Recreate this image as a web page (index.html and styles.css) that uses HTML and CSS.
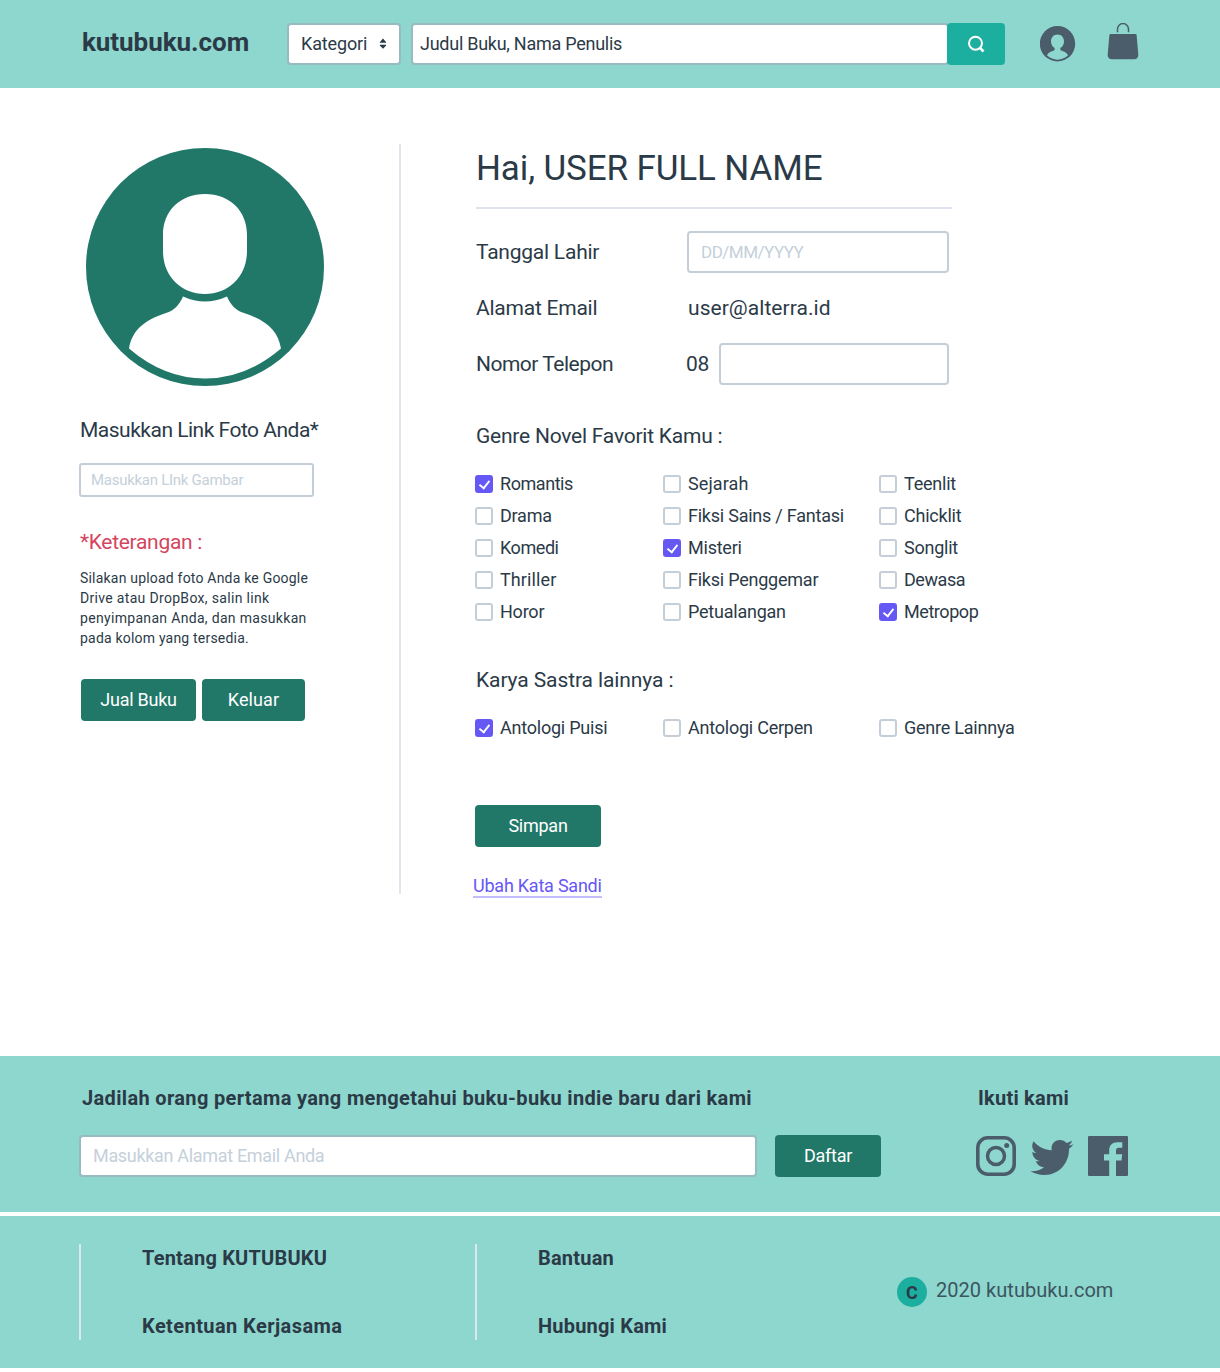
FILE: index.html
```html
<!DOCTYPE html>
<html lang="id">
<head>
<meta charset="utf-8">
<title>kutubuku.com</title>
<link rel="stylesheet" href="styles.css">
</head>
<body>
<header class="topbar">
  <a class="logo"><span>kutubuku.com</span></a>
  <div class="category"><span>Kategori</span>
    <svg width="8" height="12" viewBox="0 0 8 12"><path d="M4 .4 7.200 4.200Q7.200 4.800 6.800 4.800H1.200Q.8 4.800.8 4.200zM4 10.800 7.200 7.400Q7.200 6.800 6.800 6.800H1.200Q.8 6.800.8 7.400z" fill="#2b3a47"/></svg>
  </div>
  <div class="search"><span>Judul Buku, Nama Penulis</span></div>
  <button class="search-btn" aria-label="Cari">
    <svg width="18" height="18" viewBox="0 0 18 18" fill="none" stroke="#fff" stroke-width="2"><circle cx="8.500" cy="8.200" r="6.500"/><path d="M13 12.800 16.500 16.500" stroke-width="2.600"/></svg>
  </button>
  <svg class="user-icon" width="36" height="36" viewBox="0 0 36 36"><circle cx="17.500" cy="17.700" r="17.700" fill="#4b5c6b"/><path d="M17.500 8.400c4 0 6.500 2.800 6.500 7 0 3-1.500 5.300-3.700 6.500v1.200c0 1 .8 1.600 2 2 3 1 5 2.200 5.700 4.500C24.800 32.400 21.300 33.700 17.500 33.700s-7.300-1.300-10.500-4.100c.7-2.300 2.700-3.500 5.700-4.500 1.200-.4 2-1 2-2v-1.200c-2.200-1.200-3.700-3.500-3.700-6.500 0-4.200 2.500-7 6.500-7z" fill="#8ed7ce"/></svg>
  <svg class="bag-icon" width="32" height="38" viewBox="0 0 32 38"><path d="M10.500 9.300V6.200a5.500 5.700 0 0 1 11 0v3.100" fill="none" stroke="#4b5c6b" stroke-width="1.500"/><path d="M3.500 11h25c.6 0 1 .4 1.100 1l1.700 19.500c.2 2.800-1.500 4.800-4.200 4.800H4.900C2.200 36.300.5 34.300.7 31.500L2.400 12c.1-.6.500-1 1.100-1z" fill="#4b5c6b"/></svg>
</header>

<main class="profile">
  <aside class="side">
    <svg class="avatar" width="240" height="240" viewBox="0 0 240 240"><circle cx="120" cy="120" r="119" fill="#217868"/><path d="M120 47c25 0 42 17 42 41v16c0 25-18 43-42 43s-42-18-42-43V88c0-24 17-41 42-41zM98 149.500q22 10 44 0c4 9 9 14 17 16.500 23 7.500 34 18 37 35.500Q161 231.500 120 231.500T44 201.500c3-17.500 14-28 37-35.500 8-2.500 13-7.500 17-16.500z" fill="#fff"/></svg>
    <h2 class="label photo-label">Masukkan Link Foto Anda*</h2>
    <div class="field link-field"><span>Masukkan LInk Gambar</span></div>
    <h2 class="label note-title">*Keterangan :</h2>
    <p class="note">Silakan upload foto Anda ke Google<br><span class="wide">Drive atau DropBox, salin link</span><br><span class="wide">penyimpanan Anda, dan masukkan</span><br>pada kolom yang tersedia.</p>
    <div class="actions">
      <button class="btn sell"><span>Jual Buku</span></button>
      <button class="btn logout"><span>Keluar</span></button>
    </div>
  </aside>

  <section class="details">
    <h1 class="greeting">Hai, USER FULL NAME</h1>
    <div class="row"><span class="label key">Tanggal Lahir</span><div class="field date-field"><span>DD/MM/YYYY</span></div></div>
    <div class="row"><span class="label key">Alamat Email</span><span class="label email">user@alterra.id</span></div>
    <div class="row"><span class="label key phone-key">Nomor Telepon</span><span class="label prefix">08</span><div class="field phone-field"></div></div>

    <h2 class="label group-title">Genre Novel Favorit Kamu :</h2>
    <div class="options">
      <label class="opt on tight"><i></i><span>Romantis</span></label><label class="opt loose"><i></i><span>Sejarah</span></label><label class="opt"><i></i><span>Teenlit</span></label>
      <label class="opt"><i></i><span>Drama</span></label><label class="opt"><i></i><span>Fiksi Sains / Fantasi</span></label><label class="opt"><i></i><span>Chicklit</span></label>
      <label class="opt tight"><i></i><span>Komedi</span></label><label class="opt on"><i></i><span>Misteri</span></label><label class="opt"><i></i><span>Songlit</span></label>
      <label class="opt loose"><i></i><span>Thriller</span></label><label class="opt"><i></i><span>Fiksi Penggemar</span></label><label class="opt tight"><i></i><span>Dewasa</span></label>
      <label class="opt"><i></i><span>Horor</span></label><label class="opt"><i></i><span>Petualangan</span></label><label class="opt on tight"><i></i><span>Metropop</span></label>
    </div>
    <h2 class="label group-title other">Karya Sastra lainnya :</h2>
    <div class="options">
      <label class="opt on"><i></i><span>Antologi Puisi</span></label><label class="opt"><i></i><span>Antologi Cerpen</span></label><label class="opt"><i></i><span>Genre Lainnya</span></label>
    </div>
    <button class="btn save"><span>Simpan</span></button>
    <a class="change">Ubah Kata Sandi</a>
  </section>
</main>

<footer>
  <section class="subscribe">
    <div class="news">
      <h3 class="foot-title">Jadilah orang pertama yang mengetahui buku-buku indie baru dari kami</h3>
      <div class="news-form">
        <div class="field email-field"><span>Masukkan Alamat Email Anda</span></div>
        <button class="btn join"><span>Daftar</span></button>
      </div>
    </div>
    <div class="follow">
      <h3 class="foot-title">Ikuti kami</h3>
      <div class="social">
        <svg width="40" height="40" viewBox="0 0 40 40" fill="none" stroke="#4b5c6b"><rect x="1.800" y="1.800" width="36.400" height="36.400" rx="10" stroke-width="3.600"/><circle cx="20" cy="20" r="8.500" stroke-width="3.500"/><circle cx="30.700" cy="9.400" r="2.500" fill="#4b5c6b" stroke="none"/></svg>
        <svg class="bird" width="44" height="36" viewBox="0 0 44 36"><path d="M.3 31.300c5.400.4 10-1 13.700-4-4-.3-7-2.500-8.300-6.200 1.400.3 2.600.2 4-.2-4.400-1-7.300-4.500-7.300-9 1.300.7 2.600 1.100 4 1.200C2.300 10.200 1 5.500 3.600 1.200c4.600 5.600 11 8.700 18.200 9.100C20.500 4.500 24.500 0 30 0c2.600 0 4.900 1 6.500 2.900 2-.4 3.900-1.100 5.600-2.200-.6 2-2 3.700-3.800 4.900 1.800-.2 3.500-.7 5.100-1.400-1.200 1.900-2.700 3.300-4.400 4.600C39.400 23 29 35 14.500 35 9.600 35 4.500 33.700.3 31.300z" fill="#4b5c6b"/></svg>
        <svg width="40" height="40" viewBox="0 0 40 40"><path d="M1 0h38q1 0 1 1v38q0 1-1 1H28V24.500h5.500l.7-6.200H28v-3.500c0-2 .7-3 3-3h3.300V6.300h-4.800c-5.300 0-8.300 3-8.300 8v4H16v6.200h5.200V40H1q-1 0-1-1V1q0-1 1-1z" fill="#4b5c6b"/></svg>
      </div>
    </div>
  </section>
  <section class="links">
    <nav class="col"><a>Tentang KUTUBUKU</a><a class="wide">Ketentuan Kerjasama</a></nav>
    <nav class="col"><a>Bantuan</a><a>Hubungi Kami</a></nav>
    <div class="copy"><b class="mark">C</b><span>2020 kutubuku.com</span></div>
  </section>
</footer>
</body>
</html>
```
FILE: styles.css
```css
* { box-sizing: border-box; }
body { margin: 0; background: #fff; color: #2b3a47; font-family: Roboto, "Liberation Sans", sans-serif; font-size: 18px; line-height: 24px; white-space: nowrap; }
h1, h2, h3, p { margin: 0; font-weight: 400; }
button { border: 0; padding: 0; font: inherit; }
svg { display: block; flex: none; }

.topbar { height: 88px; background: #8ed7ce; display: flex; padding: 23px 0 0 82px; align-items: flex-start; }
.logo { width: 205px; font-size: 26px; font-weight: 700; line-height: 39px; letter-spacing: -.05px; }
.category, .search { height: 42px; border: 2px solid #9abac1; border-radius: 4px; background: #fff; display: flex; align-items: center; }
.category { width: 114px; justify-content: space-between; padding: 0 12px; letter-spacing: -.15px; }
.search { width: 538px; margin-left: 10px; padding-left: 7px; letter-spacing: -.26px; }
.search-btn { width: 58px; height: 42px; margin-left: -2px; border-radius: 4px; background: #1caf9f; display: grid; place-items: center; }
.user-icon { margin: 3px 0 0 35px; }
.bag-icon { margin: 0 0 0 31px; }

.profile { display: flex; height: 968px; padding: 56px 0 0 80px; }
.side { width: 321px; height: 750px; border-right: 2px solid #e0e6ee; }
.avatar { margin: 3px 0 0 5px; }
.label { font-size: 21px; line-height: 28px; letter-spacing: -.23px; }
.photo-label { margin-top: 29px; letter-spacing: -.5px; }
.field { border: 2px solid #c4ced8; border-radius: 4px; background: #fff; color: #c4d0da; display: flex; align-items: center; height: 42px; padding-left: 12px; }
.link-field { width: 235px; height: 34px; margin: 19px 0 0 -1px; padding-left: 10px; border-radius: 3px; font-size: 15px; letter-spacing: -.27px; }
.note-title { margin-top: 31px; color: #d5455f; letter-spacing: -.3px; }
.note { margin-top: 12px; font-size: 14px; line-height: 20px; letter-spacing: .2px; }
.note .wide { letter-spacing: .32px; }
.actions { display: flex; gap: 6px; margin: 31px 0 0 1px; }
.btn { height: 42px; border-radius: 4px; background: #217868; color: #fff; display: grid; place-items: center; letter-spacing: -.25px; }
.sell { width: 115px; }
.logout { width: 103px; letter-spacing: .1px; }

.details { width: 640px; padding-left: 75px; }
.greeting { width: 476px; height: 65px; border-bottom: 2px solid #dfe3f1; font-size: 35px; line-height: 50px; letter-spacing: -.12px; }
.row { display: flex; align-items: center; height: 56px; }
.greeting + .row { margin-top: 15px; }
.key { width: 211px; }
.phone-key { letter-spacing: -.5px; }
.date-field { width: 262px; font-size: 17px; letter-spacing: -.5px; }
.email { margin-left: 1px; letter-spacing: .05px; }
.prefix { width: 32px; margin-left: -1px; }
.phone-field { width: 230px; margin-left: 1px; }
.group-title { margin-top: 30px; }
.options { display: grid; grid-template-columns: 188px 216px 160px; grid-auto-rows: 32px; align-items: center; margin: 18px 0 0 -1px; }
.opt { display: flex; align-items: center; gap: 7px; letter-spacing: -.23px; }
.opt.tight { letter-spacing: -.44px; }
.opt.loose { letter-spacing: .1px; }
.opt i { width: 18px; height: 18px; border: 2px solid #c4ced8; border-radius: 3px; display: grid; place-items: center; }
.opt.on i { border-color: #6558f5; background: #6558f5; }
.opt.on i::before { content: ""; width: 5px; height: 9px; margin-top: -2px; border: solid #fff; border-width: 0 2px 2px 0; transform: rotate(38deg) scale(.92); }
.group-title.other { margin-top: 38px; letter-spacing: -.1px; }
.save { width: 126px; margin: 61px 0 0 -1px; }
.change { display: block; width: 129px; height: 25px; margin: 26px 0 0 -3px; border-bottom: 2px solid #c3bdfb; color: #6558f5; line-height: 26px; letter-spacing: -.23px; }

.subscribe { height: 156px; background: #8ed7ce; display: flex; padding: 28px 0 0 79px; }
.foot-title { font-size: 20px; line-height: 28px; font-weight: 700; letter-spacing: .34px; }
.news { width: 897px; }
.news .foot-title { padding-left: 3px; }
.news-form { display: flex; gap: 18px; margin-top: 23px; }
.email-field { width: 678px; border-color: #9abac1; letter-spacing: -.32px; }
.join { width: 106px; }
.follow .foot-title { padding-left: 2px; letter-spacing: .22px; }
.social { display: flex; margin-top: 24px; }
.bird { margin: 4px 14px 0 14px; }
.links { height: 152px; margin-top: 4px; background: #8ed7ce; display: flex; padding: 28px 0 0 79px; }
.col { width: 396px; height: 96px; border-left: 2px solid #dfe6ee; padding-left: 61px; display: flex; flex-direction: column; justify-content: space-between; font-size: 20px; line-height: 28px; font-weight: 700; letter-spacing: .2px; }
.col .wide { letter-spacing: .42px; }
.copy { display: flex; margin: 33px 0 0 26px; gap: 9px; font-size: 20px; line-height: 26px; color: #3c5560; letter-spacing: .04px; }
.mark { width: 30px; height: 30px; border-radius: 50%; background: #1caf9f; color: #2b3a47; font-size: 18px; line-height: 31px; text-align: center; font-weight: 700; }
```
